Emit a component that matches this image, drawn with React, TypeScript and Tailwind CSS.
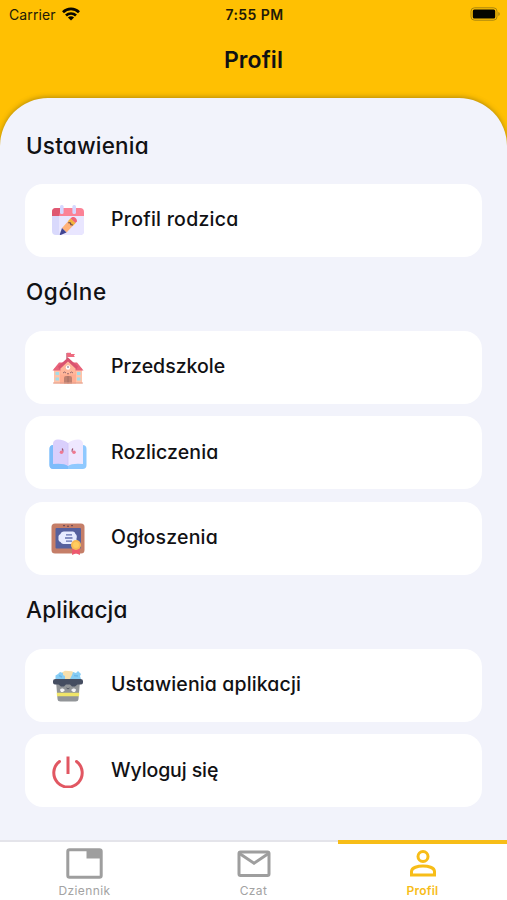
import type { ReactNode } from 'react';

function CalendarIcon() {
  return (
    <svg viewBox="0 0 32 32" className="h-8 w-8">
      <path d="M0 10h32v16a4 4 0 0 1-4 4H4a4 4 0 0 1-4-4z" fill="#d9d9fc" />
      <path d="M7 10h25v16a4 4 0 0 1-4 4H11a4 4 0 0 1-4-4z" fill="#e9e6ff" />
      <path d="M4 3h24a4 4 0 0 1 4 4v4H0V7a4 4 0 0 1 4-4z" fill="#fb8296" />
      <path d="M4 3h5L7 11H0V7a4 4 0 0 1 4-4z" fill="#df5872" />
      <rect x="8" y="0" width="3.6" height="9" rx="1.6" fill="#d5d7ff" />
      <rect x="20.4" y="0" width="3.6" height="9" rx="1.6" fill="#d5d7ff" />
      <path d="M10 23 18.5 13.5l5 4.5-9 9.5z" fill="#ffb27a" />
      <path d="m16 16.3 2.5-2.8 5 4.5-2.8 3z" fill="#f2b53c" />
      <path d="m16.3 17.6 2.2.4.4 1.7 2 .3" stroke="#6c4a50" strokeWidth="1.2" fill="none" />
      <path d="m18.5 13.5 1.400-1.300c2.300-1 5.400 1.500 5 4L23.500 18z" fill="#ef6578" />
      <path d="M10 23 7.800 29.200c0 .6.4.9.9.7L14.500 27.500z" fill="#424591" />
    </svg>
  );
}

function SchoolIcon() {
  return (
    <svg viewBox="0 0 32 32" className="h-8 w-8">
      <rect x="2" y="16" width="28" height="15.500" fill="#ffc3a8" />
      <path d="M8 14 16 7l8 7v17.500H8z" fill="#ffad91" />
      <path d="M7 10.500h18l6.500 8H.5z" fill="#e8637a" />
      <path d="M16 5.500 6 14.500l1.500 3L16 10l8.500 7.500 1.500-3z" fill="#d95370" />
      <path d="m16 9.500 7.500 7v6h-15v-6z" fill="#ffb79b" />
      <path d="M15 7V1" stroke="#bc5168" strokeWidth="1.300" />
      <path d="M15 .8h4v1.300h4L21.800 3.700 23 5h-8z" fill="#ee6a7f" />
      <circle cx="16" cy="15.500" r="2.200" fill="#fff" />
      <path d="M16 14v2" stroke="#625575" strokeWidth=".9" />
      <path d="M11 21q1.500-2 3 0M18 21q1.500-2 3 0M15 21.500q1 1 2 0" stroke="#8b6068" strokeWidth=".9" fill="none" />
      <path d="M12 31.500V26a2 2 0 0 1 2-2h4a2 2 0 0 1 2 2v5.500z" fill="#bf8170" />
      <path d="M16 24v7.500" stroke="#a06b62" strokeWidth=".8" />
      <path d="M3.500 20H7v3H3.500zm0 5.500H7v3H3.500zM25 20h3.500v3H25zm0 5.500h3.500v3H25z" fill="#a5dbe6" />
      <path d="M1 31h30" stroke="#e29d8b" strokeWidth="1" />
    </svg>
  );
}

function BookIcon() {
  return (
    <svg viewBox="0 0 38 32" className="h-8 w-[38px]">
      <rect x=".5" y="7" width="37" height="24" rx="4" fill="#8fc9ff" />
      <path d="M4.500 7H19v24H4.500a4 4 0 0 1-4-4V11a4 4 0 0 1 4-4z" fill="#7dbcfb" />
      <path d="M4 6q0-4.500 5-4.500 6 0 10 3.500v23q-4-3-15-2z" fill="#d9cffc" />
      <path d="M34 6q0-4.500-5-4.500-6 0-10 3.500v23q4-3 15-2z" fill="#eee7ff" />
      <path d="M19 5v23" stroke="#cfc6f7" strokeWidth=".8" />
      <path d="M13 10.500q1.400 1.400.8 3.300M24 10.500q-1.400 1.400-.8 3.300" stroke="#98506d" strokeWidth="1.100" fill="none" />
      <circle cx="12.500" cy="14.300" r="1.800" fill="#ef7890" />
      <circle cx="25" cy="14.300" r="1.800" fill="#ef7890" />
    </svg>
  );
}

function BoardIcon() {
  return (
    <svg viewBox="0 0 34 32" className="h-8 w-[34px]">
      <rect x=".5" y=".5" width="33" height="30" rx="3.500" fill="#c57e68" />
      <rect x="4.500" y="5" width="25.500" height="20.500" rx="1" fill="#56609d" />
      <path d="M12 2.700h2M16 3.200h2M20 2.700h2" stroke="#633f50" />
      <path d="M13 8.500h9q2 0 2.500 2.500 2 1.500 1 4.500.5 3-2 4-1 1.500-3 1.500h-8q-2 0-3-2-2.500-1-2-4-.5-3 2-4 .5-2.500 3.500-2.500z" fill="#e7ebff" />
      <path d="M15 11.800h6M14 15h7.500M15 18.200h6" stroke="#6471ae" strokeWidth="1.300" />
      <path d="m21.500 23-.5 9 4-1.700 4 1.700-.5-9z" fill="#ee596f" />
      <circle cx="25" cy="22" r="5" fill="#f9ba54" />
      <circle cx="25" cy="22" r="3" fill="#ffcd60" />
    </svg>
  );
}

function BasketIcon() {
  return (
    <svg viewBox="0 0 32 32" className="h-8 w-8">
      <path d="M10 2.500 13 .8l7 .5 2 1.500V9H9z" fill="#f7dfac" />
      <path d="M3.500 9V5.500L6 4l2-2 3 1v2l2 1v4zM18 9l2-4 1-3 3 1 2-2 3 3-1 2 1 3z" fill="#87cdf5" />
      <path d="M7 5.500 10 7M22 5.500l4 .5" stroke="#6eb9e7" strokeWidth="1.500" />
      <path d="M4 11h24l-1.500 18q-.2 2.500-3 2.500h-15q-2.800 0-3-2.500z" fill="#929598" />
      <path d="M4.700 22.800h22.600l-.3 3.400H5z" fill="#f0e568" />
      <path d="M3.500 9h25q2.500 0 2.500 2v1.500q0 2-2 2h-3.500l-2.500 2h-3l-2-2h-4l-2 2H9l-2.500-2H3q-2 0-2-2V11q0-2 2.500-2z" fill="#454d60" />
      <path d="M8 20q0-2 3-1.500l2 1.500-2 2H9zM24 20q0-2-3-1.500L19 20l2 2h2z" fill="#f5f5f7" />
      <path d="M14.500 18q1.500 1.800 3 0" stroke="#555964" fill="none" />
    </svg>
  );
}

function PowerIcon() {
  return (
    <svg viewBox="0 0 32 32" className="h-8 w-8" fill="none" stroke="#e15762" strokeWidth="3" strokeLinecap="round">
      <path d="M16 .5v17.500" strokeLinecap="butt" />
      <path d="M7.500 5.500a14.200 14.200 0 1 0 17 0" />
    </svg>
  );
}

const geometric = "font-['Inter','Lato',sans-serif] [font-feature-settings:'cv11'] text-[#111114]";

function Heading({ children, tracking }: { children: string; tracking: string }) {
  return (
    <h2 className={`${geometric} flex h-[73.600px] items-center pb-[3px] pl-px text-[22.500px] font-medium ${tracking}`}>
      {children}
    </h2>
  );
}

function Row({ icon, label, tracking }: { icon: ReactNode; label: string; tracking: string }) {
  return (
    <li className="flex h-[73px] items-center rounded-[18px] bg-white">
      <span className="flex w-[86px] justify-center pt-[2px]">{icon}</span>
      <span className={`${geometric} pb-px text-[19.500px] font-[450] whitespace-nowrap ${tracking}`}>{label}</span>
    </li>
  );
}

export default function App() {
  return (
    <div className="flex h-[900px] w-[507px] flex-col overflow-hidden bg-[#ffc002] font-['Inter',sans-serif]">
      <div className="grid h-[28px] shrink-0 grid-cols-3 items-center pr-[7px] pl-[9px] text-[14px] text-[#211a08]">
        <div className="flex items-center gap-[6px] tracking-[0.100px]">
          Carrier
          <svg viewBox="0 0 18 14" className="h-[14px] w-[18px]" fill="none" stroke="#090800" strokeWidth="2.700">
            <path d="M1 5.200a11.400 11.400 0 0 1 16 0M4 8.500a7.200 7.200 0 0 1 10 0" />
            <path d="M9 13.500 5.900 10.600a4.500 4.500 0 0 1 6.200 0z" fill="#090800" stroke="none" />
          </svg>
        </div>
        <div className="text-center text-[14px] font-semibold tracking-[0.400px]">7:55 PM</div>
        <svg viewBox="0 0 30 14" className="h-[14px] w-[30px] justify-self-end">
          <rect x="1" y=".8" width="26" height="12.400" rx="3.500" fill="none" stroke="#a98510" strokeWidth="1" />
          <rect x="2.800" y="2.500" width="22.400" height="9" rx="1.500" fill="#050500" />
          <path d="M28.300 5v4q1.500-.6 1.500-2t-1.500-2z" fill="#a98510" />
        </svg>
      </div>
      <h1 className={`${geometric} flex h-[70px] shrink-0 items-center justify-center pb-[5px] text-[23px] font-semibold tracking-[0.100px]`}>
        Profil
      </h1>
      <main className="flex-1 rounded-t-[48px] bg-[#f2f3fb] px-[25px] pt-[12.400px] shadow-[0_-1px_5px_rgba(90,75,20,0.450)]">
        <Heading tracking="tracking-[0.200px]">Ustawienia</Heading>
        <ul>
          <Row icon={<CalendarIcon />} label="Profil rodzica" tracking="tracking-[0.250px]" />
        </ul>
        <Heading tracking="tracking-[0.600px]">Ogólne</Heading>
        <ul className="flex flex-col gap-[12.700px]">
          <Row icon={<SchoolIcon />} label="Przedszkole" tracking="tracking-[0px]" />
          <Row icon={<BookIcon />} label="Rozliczenia" tracking="tracking-[0.100px]" />
          <Row icon={<BoardIcon />} label="Ogłoszenia" tracking="tracking-[0.200px]" />
        </ul>
        <Heading tracking="tracking-[0.200px]">Aplikacja</Heading>
        <ul className="flex flex-col gap-[12.700px]">
          <Row icon={<BasketIcon />} label="Ustawienia aplikacji" tracking="tracking-[0.130px]" />
          <Row icon={<PowerIcon />} label="Wyloguj się" tracking="tracking-[-0.100px]" />
        </ul>
      </main>
      <nav className="grid h-[60px] shrink-0 grid-cols-3 bg-white text-[12px] text-[#a3a3a3]">
        <div className="flex flex-col items-center border-t-2 border-[#e4e4ea] pt-[6px]">
          <svg viewBox="0 0 37 31" className="h-[31px] w-[37px]">
            <rect x="1.800" y="1.800" width="33.400" height="27.400" rx="1.800" fill="none" stroke="#9e9e9e" strokeWidth="3" />
            <path d="M20.500 2H35v8.500H20.500z" fill="#9e9e9e" />
          </svg>
          <span className="mt-[3px] leading-[18px] tracking-[0.400px]">Dziennik</span>
        </div>
        <div className="flex flex-col items-center border-t-2 border-[#e4e4ea] pt-[6px]">
          <svg viewBox="0 0 34 31" className="h-[31px] w-[34px]" fill="none" stroke="#9e9e9e" strokeWidth="3">
            <rect x="2" y="4" width="30" height="23.500" rx="1.500" />
            <path d="m2.500 5.500 14.500 9.800L31.500 5.500" />
          </svg>
          <span className="mt-[3px] leading-[18px] tracking-[0.400px]">Czat</span>
        </div>
        <div className="flex flex-col items-center border-t-[4px] border-[#f7bd18] pt-1 text-[#f7bd18]">
          <svg viewBox="0 0 28 31" className="h-[31px] w-[28px]" fill="none" stroke="#f7bd18" strokeWidth="3">
            <circle cx="14" cy="8.500" r="5" />
            <path d="M2.500 27v-3.500C2.500 19.500 9 18 14 18s11.500 1.500 11.500 5.500V27z" />
          </svg>
          <span className="mt-[3px] leading-[18px] font-semibold tracking-[0.200px]">Profil</span>
        </div>
      </nav>
    </div>
  );
}
